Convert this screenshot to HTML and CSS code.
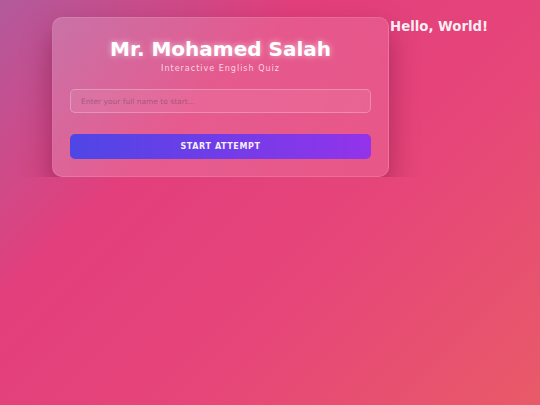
FILE: index.html
```html
<!doctype html>
<html>
	<head>
		<title>Mr. Mohamed Salah - Interactive English Quiz</title>

		<link rel="stylesheet" href="styles.css">
	</head>
	<body>
		<main class="card">
			<header class="card-head">
				<h1>Mr. Mohamed Salah</h1>
				<p class="subtitle">Interactive English Quiz</p>
			</header>

			<input class="name-input" type="text" placeholder="Enter your full name to start...">

			<button class="start-btn" type="button">Start Attempt</button>
		</main>

		<h2 class="hello">Hello, World!</h2>
	</body>
</html>
```

FILE: styles.css
```css
html {
	min-height: 100%;
	background: linear-gradient(135deg, #b25a9c 0%, #e23f7c 32%, #e6457a 60%, #e85a68 100%);
}

body {
	margin: 0;
	padding: 17px 0 0 52px;
	display: flex;
	align-items: flex-start;
	font-family: "DejaVu Sans", Verdana, sans-serif;
	color: #fff;
}

	.card {
		box-sizing: border-box;
		width: 337px;
		padding: 19px 17px 17px;
		border-radius: 10px;
		border: 1px solid rgba(255,255,255,0.12);
		background: linear-gradient(110deg, rgba(255,255,255,0.18), rgba(255,255,255,0.1));
		box-shadow: 0 14px 30px rgba(80,0,40,0.4);
		display: flex;
		flex-direction: column;
	}

	.card-head {
		text-align: center;
		margin-bottom: 15px;
	}

	h1 {
		margin: 0;
		font-size: 20px;
		font-weight: bold;
		line-height: 25px;
		text-shadow: 0 0 6px rgba(255,255,255,0.6);
	}

	.subtitle {
		margin: 2px 0 0;
		font-size: 8px;
		letter-spacing: 1px;
		line-height: 10px;
		color: rgba(255,225,235,0.9);
	}

	.name-input {
		box-sizing: border-box;
		height: 24px;
		padding: 0 10px;
		border: 1px solid rgba(255,255,255,0.25);
		border-radius: 5px;
		background: rgba(255,255,255,0.08);
		font-family: "DejaVu Sans", Verdana, sans-serif;
		font-size: 7.5px;
		color: #fff;
		outline: none;
	}

	.name-input::placeholder {
		color: rgba(130,70,105,0.6);
	}

	.start-btn {
		margin-top: 21px;
		height: 25px;
		border: 0;
		border-radius: 5px;
		background: linear-gradient(90deg, #4f46e5, #9333ea);
		color: #f4eefe;
		font-family: "DejaVu Sans", Verdana, sans-serif;
		font-size: 8px;
		font-weight: bold;
		letter-spacing: 0.6px;
		text-transform: uppercase;
	}

	.hello {
		margin: 1px 0 0 1px;
		font-size: 13.3px;
		font-weight: bold;
		line-height: 17px;
		color: rgba(255,255,255,0.92);
	}
```
